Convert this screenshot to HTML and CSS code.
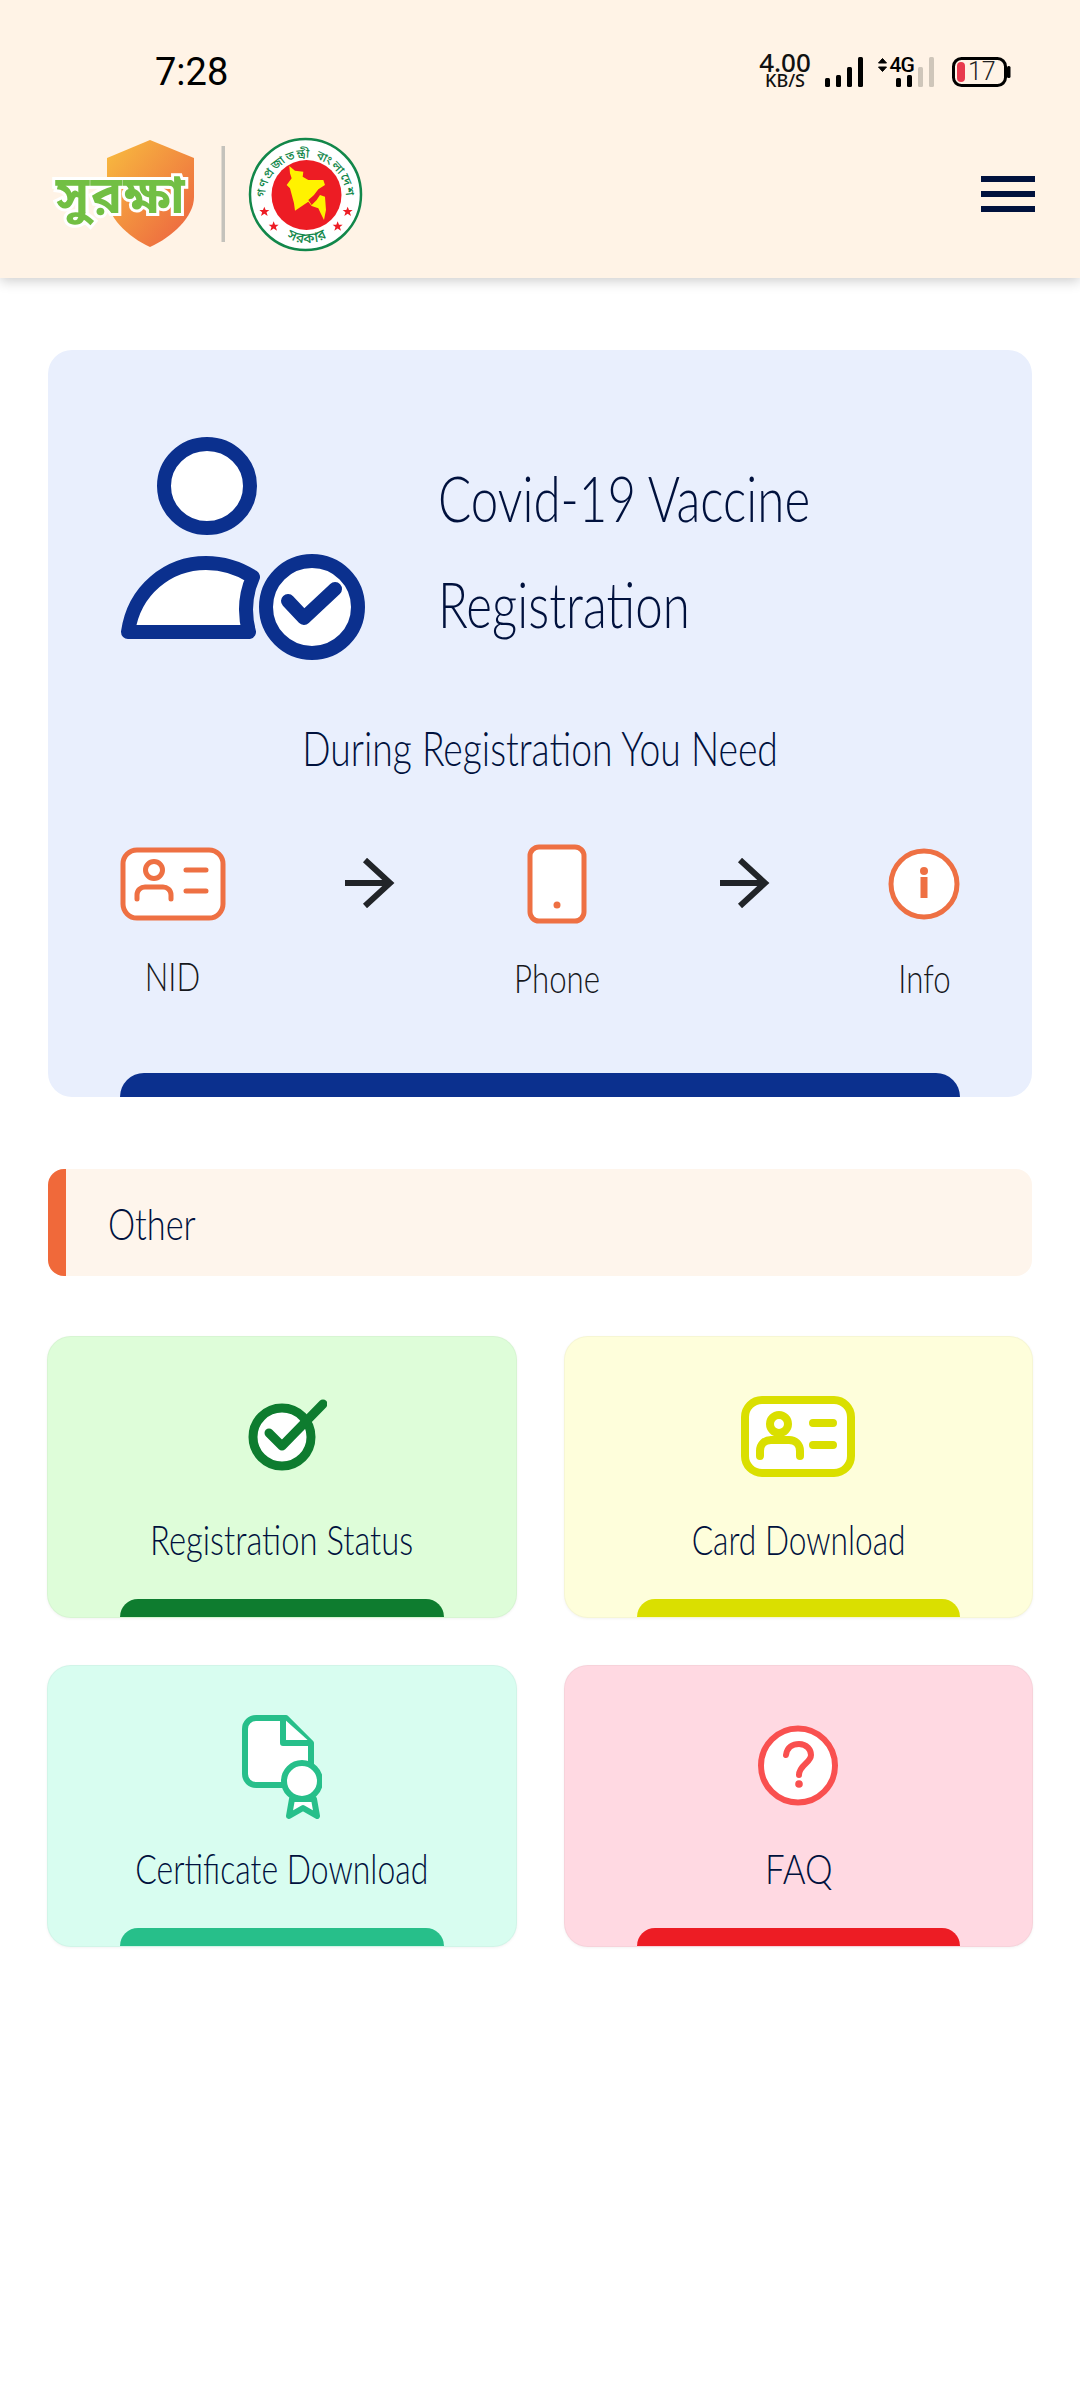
FILE: index.html
```html
<!DOCTYPE html>
<html lang="en">
<head>
<meta charset="utf-8">
<title>Surokkha</title>
<link rel="stylesheet" href="styles.css">
</head>
<body>
<header class="topbar">
  <div class="status">
    <span class="clock">7:28</span>
    <div class="status-right">
      <div class="speed"><span class="speed-num">4.00</span><span class="speed-unit">KB/S</span></div>
      <svg class="status-icons" width="186" height="46" viewBox="826 49 186 46">
        <g fill="#000">
          <rect x="826" y="78" width="5" height="9" rx="1.5"/><rect x="837" y="75" width="5" height="12" rx="1.5"/><rect x="848" y="67" width="5" height="20" rx="1.5"/><rect x="859" y="57" width="5" height="30" rx="1.5"/>
          <rect x="897" y="78" width="5" height="9" rx="1.5"/><rect x="908" y="75" width="5" height="12" rx="1.5"/>
          <path d="M879.5 63l4-4.5 4 4.5zM879.5 67l4 4.5 4-4.5z" stroke="#000" stroke-width="1" stroke-linejoin="round"/>
        </g>
        <rect x="919" y="67" width="5" height="20" rx="1.5" fill="#cfc6ba"/><rect x="930" y="57" width="5" height="30" rx="1.5" fill="#cfc6ba"/>
        <text class="net" x="890.5" y="72">4G</text>
        <rect x="954.5" y="58.5" width="52" height="27" rx="8" fill="none" stroke="#000" stroke-width="3"/>
        <rect x="958" y="62" width="8" height="20" rx="4" fill="#e83a4e"/>
        <rect x="1008" y="66" width="3.5" height="12" rx="1.5" fill="#000"/>
        <text class="batt" x="969" y="80">17</text>
      </svg>
    </div>
  </div>
  <div class="toolbar">
    <svg class="logos" width="320" height="130" viewBox="48 134 320 130">
      <defs><linearGradient id="sh" x1="0" y1="0" x2="1" y2="1"><stop offset="0" stop-color="#f8bd3f"/><stop offset="1" stop-color="#ec5f40"/></linearGradient></defs>
      <path d="M150 140l44 18v39c0 20-22 40-44 50-22-10-43-30-43-50v-39z" fill="url(#sh)"/>
      <text class="logo-word" x="121" y="213">সুরক্ষা</text>
      <rect x="221.500" y="146" width="3.500" height="96" fill="#c4c2bc"/>
      <circle cx="305.500" cy="194.500" r="55.500" fill="#fff" stroke="#12874a" stroke-width="2.500"/>
      <circle cx="306.500" cy="195" r="35" fill="#ed1c24"/>
      <g transform="translate(240 130) scale(.3333)">
        <path d="M148 108L165 122 190 125 188 140 205 150 250 150 255 165 235 178 222 195 205 210 215 225 230 210 240 195 255 200 258 240 252 270 242 250 235 235 215 228 205 215 165 242 162 220 150 175 140 165 155 145 150 130z" fill="#fff200"/>
        <g fill="#ed1c24">
          <path transform="translate(73 245)" d="M0-15L4-5H15L6.500 2 10 13 0 6.500-10 13-6.500 2-15-5H-4z"/>
          <path transform="translate(101 289)" d="M0-15L4-5H15L6.500 2 10 13 0 6.500-10 13-6.500 2-15-5H-4z"/>
          <path transform="translate(293 289)" d="M0-15L4-5H15L6.500 2 10 13 0 6.500-10 13-6.500 2-15-5H-4z"/>
          <path transform="translate(323 245)" d="M0-15L4-5H15L6.500 2 10 13 0 6.500-10 13-6.500 2-15-5H-4z"/>
        </g>
      </g>
      <path id="arcTop" d="M265 198A40.500 40.500 0 1 1 346 198" fill="none"/>
      <path id="arcBot" d="M280 233Q306 253 334 233" fill="none"/>
      <text class="emblem"><textPath href="#arcTop" startOffset="50%" text-anchor="middle">গণপ্রজাতন্ত্রী বাংলাদেশ</textPath></text>
      <text class="emblem emblem-low"><textPath href="#arcBot" startOffset="50%" text-anchor="middle">সরকার</textPath></text>
    </svg>
    <div class="burger"><i></i><i></i><i></i></div>
  </div>
</header>
<main class="page">
  <section class="reg-card">
    <div class="hero">
      <svg class="hero-icon" width="245" height="224" viewBox="120 436 245 224">
        <g fill="#fff" stroke="#0b308e" stroke-width="14" stroke-linejoin="round" stroke-linecap="round">
          <ellipse cx="207" cy="486" rx="43" ry="42"/>
          <path d="M128 632c6-42 40-69 78-69 18 0 33 5 47 14-8 18-9 36-4 55z"/>
          <circle cx="312" cy="607" r="46"/>
          <path d="M288 601l16 17 31-29" fill="none"/>
        </g>
      </svg>
      <h1 class="hero-title"><span class="tx-left">Covid-19 Vaccine</span><span class="tx-left">Registration</span></h1>
    </div>
    <p class="need"><span class="tx">During Registration You Need</span></p>
    <div class="steps">
      <div class="step step-nid">
        <svg width="106" height="74" viewBox="0 0 106 74"><g fill="#fff" stroke="#ee7043" stroke-width="5" stroke-linecap="round"><rect x="3" y="3" width="100" height="68" rx="14"/><circle cx="34" cy="23" r="8.500"/><path d="M17 52v-4c0-5 4-8 8-8h18c4 0 8 3 8 8v4M66 23h20M66 44h20" fill="none"/></g></svg>
        <span class="tx lbl">NID</span>
      </div>
      <svg class="arrow" width="50" height="50" viewBox="0 0 50 50"><path d="M0 25h45M20 2l25 23-25 23" fill="none" stroke="#212428" stroke-width="6"/></svg>
      <div class="step step-phone">
        <svg width="60" height="80" viewBox="0 0 60 80"><rect x="3" y="3" width="54" height="74" rx="9" fill="#fff" stroke="#ee7043" stroke-width="5"/><circle cx="30" cy="61" r="3.500" fill="#ee7043"/></svg>
        <span class="tx lbl">Phone</span>
      </div>
      <svg class="arrow" width="50" height="50" viewBox="0 0 50 50"><path d="M0 25h45M20 2l25 23-25 23" fill="none" stroke="#212428" stroke-width="6"/></svg>
      <div class="step step-info">
        <svg width="72" height="74" viewBox="0 0 72 74"><circle cx="36" cy="37" r="33" fill="#fff" stroke="#ee7043" stroke-width="5"/><circle cx="36" cy="24" r="4" fill="#ee7043"/><rect x="32.500" y="30" width="7" height="21" fill="#ee7043"/></svg>
        <span class="tx lbl">Info</span>
      </div>
    </div>
    <div class="bar bar-main"></div>
  </section>

  <div class="other"><span class="tx-left other-text">Other</span></div>

  <section class="grid">
    <a class="tile tile-green">
      <svg class="tile-icon" width="90" height="72" viewBox="0 0 90 72"><circle cx="45" cy="38" r="29" fill="#fff" stroke="#0e7c2f" stroke-width="9"/><path d="M32 34l13 13 41-42" fill="none" stroke="#0e7c2f" stroke-width="9" stroke-linecap="round" stroke-linejoin="round"/></svg>
      <span class="tx tile-text">Registration Status</span>
      <div class="bar bar-green"></div>
    </a>
    <a class="tile tile-yellow">
      <svg class="tile-icon" width="114" height="81" viewBox="0 0 114 81"><g fill="#fff" stroke="#dadf00" stroke-width="8" stroke-linecap="round"><rect x="4" y="4" width="106" height="73" rx="17"/><circle cx="38" cy="28" r="9"/><path d="M19 60v-5c0-7 5-11 11-11h18c6 0 11 4 11 11v5M72 27h20M72 49h20" fill="none"/></g></svg>
      <span class="tx tile-text">Card Download</span>
      <div class="bar bar-yellow"></div>
    </a>
    <a class="tile tile-mint">
      <svg class="tile-icon cert" width="80" height="104" viewBox="0 0 80 104"><g fill="#fff" stroke="#27bf8a" stroke-width="6" stroke-linejoin="round"><path d="M14 3h30l25 25v42H14a11 11 0 0 1-11-11V14A11 11 0 0 1 14 3z"/><path d="M41 3v25h28"/><path d="M50 84l-3 17 14-8 14 8-3-17z"/><circle cx="60" cy="66" r="18"/></g></svg>
      <span class="tx tile-text">Certificate Download</span>
      <div class="bar bar-mint"></div>
    </a>
    <a class="tile tile-pink">
      <svg class="tile-icon" width="80" height="81" viewBox="0 0 80 81"><circle cx="40" cy="40.500" r="37" fill="#fff" stroke="#f9504f" stroke-width="6"/><path d="M28 30c1-8 7-11 13-11 8 0 12 6 12 11 0 8-12 10-12 20" fill="none" stroke="#f9504f" stroke-width="6" stroke-linecap="round"/><circle cx="41" cy="59" r="3.800" fill="#f9504f"/></svg>
      <span class="tx tile-text">FAQ</span>
      <div class="bar bar-red"></div>
    </a>
  </section>
</main>
</body>
</html>
```

FILE: styles.css
```css
* { box-sizing: border-box; }
html, body { margin: 0; padding: 0; }
body { width: 1080px; height: 2400px; background: #fff; font-family: "Lato", "Liberation Sans", sans-serif; color: #00113d; overflow: hidden; }

.topbar { height: 278px; background: #fff3e6; box-shadow: 0 3px 12px rgba(0,0,0,.2); display: flex; flex-direction: column; }
.status { display: flex; justify-content: space-between; align-items: flex-start; height: 130px; padding: 49px 69px 0 155px; }
.clock { font: 400 38px/42px Roboto, sans-serif; color: #000; margin-top: 2px; }
.status-right { display: flex; align-items: flex-start; gap: 14px; }
.status-icons { display: block; }
.speed { display: flex; flex-direction: column; align-items: center; width: 52px; margin-top: 3px; font-family: "Noto Sans", sans-serif; color: #111; font-weight: 500; }
.speed-num { font-size: 26px; line-height: 20px; }
.speed-unit { font-size: 18px; line-height: 17px; }
.net { font: 500 21px "Roboto", sans-serif; fill: #000; letter-spacing: -1px; }
.batt { font: 300 25px "Roboto", sans-serif; fill: #222; }

.toolbar { display: flex; justify-content: space-between; align-items: flex-start; padding: 4px 45px 0 48px; }
.logos { display: block; flex: none; }
.logo-word { font: 700 52px "Noto Sans", "Noto Sans Bengali", sans-serif; fill: #72bf44; stroke: #fff; stroke-width: 6px; paint-order: stroke; text-anchor: middle; letter-spacing: 1.5px; }
.emblem { font: 500 12px "Noto Sans", "Noto Sans Bengali", sans-serif; fill: #12874a; letter-spacing: 1.5px; }
.emblem-low { font-size: 14px; letter-spacing: .5px; }
.burger { display: flex; flex-direction: column; gap: 9px; margin-top: 42px; }
.burger i { display: block; width: 54px; height: 6px; background: #00113d; }

.page { padding: 72px 47px 0 47px; }
.tx, .tx-left { display: inline-block; font-weight: 300; white-space: nowrap; transform: scaleX(.78); }
.tx { transform-origin: center; }
.tx-left { transform-origin: left center; display: block; }

.reg-card { position: relative; height: 747px; margin: 0 1px; background: #e9effd; border-radius: 24px; overflow: hidden; padding: 86px 72px 0; }
.hero { display: flex; align-items: flex-start; gap: 73px; }
.hero-icon { display: block; flex: none; }
.hero-title { margin: 9px 0 0; font-size: 64px; line-height: 106px; font-weight: 300; color: #00113d; }
.hero-title .tx-left { transform: scaleX(.77); }
.need { margin: 58px 0 0; text-align: center; font-size: 48px; line-height: 60px; color: #00113d; }
.need .tx { transform: scaleX(.777); }

.steps { display: flex; justify-content: space-between; align-items: flex-start; margin-top: 66px; height: 150px; }
.step { display: flex; flex-direction: column; align-items: center; }
.step svg { display: block; }
.lbl { font-size: 40px; line-height: 48px; color: #16181c; }
.step-nid { width: 106px; padding-top: 3px; gap: 31px; }
.step-phone { width: 88px; gap: 30px; }
.step-info { width: 72px; padding-top: 3px; gap: 33px; }
.arrow { display: block; margin-top: 14px; }
.bar { position: absolute; bottom: 0; border-radius: 24px 24px 0 0; }
.bar-main { left: 72px; right: 72px; height: 24px; background: #0b308e; }

.other { margin: 72px 1px 0; height: 107px; background: #fef5ec; border-radius: 16px; border-left: 18px solid #f0693a; padding-left: 42px; display: flex; align-items: center; }
.other-text { font-size: 44px; line-height: 60px; color: #00113d; }

.grid { margin-top: 60px; display: grid; grid-template-columns: 469.5px 469.5px; gap: 47px; }
.tile { position: relative; height: 282px; border-radius: 24px; overflow: hidden; display: flex; flex-direction: column; align-items: center; border: 1px solid rgba(0,0,0,.03); box-shadow: 0 1px 3px rgba(0,0,0,.05); }
.tile-icon { display: block; margin-top: 59px; }
.tile-green .tile-icon { margin-top: 62px; }
.tile-mint .tile-icon { margin-top: 49px; }
.tile-text { font-size: 42px; line-height: 56px; color: #00113d; position: absolute; top: 174px; }
.tile-yellow .tx { transform: scaleX(.755); }
.tile-mint .tx { transform: scaleX(.76); }
.tile-pink .tx { transform: scaleX(.83); }
.tile .bar { left: 72px; right: 72px; height: 18px; }
.tile-green { background: #defdd9; }
.tile-yellow { background: #fefedb; }
.tile-mint { background: #d8fdf0; }
.tile-pink { background: #ffd9e2; }
.bar-green { background: #0e7c2f; }
.bar-yellow { background: #dadf00; }
.bar-mint { background: #27bf8a; }
.bar-red { background: #ed1c24; }
```
